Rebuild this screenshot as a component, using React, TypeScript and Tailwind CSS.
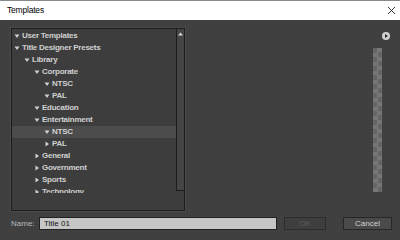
import React from 'react';

type Row = { label: string; level: number; open: boolean; selected?: boolean };

const rows: Row[] = [
  { label: 'User Templates', level: 0, open: true },
  { label: 'Title Designer Presets', level: 0, open: true },
  { label: 'Library', level: 1, open: true },
  { label: 'Corporate', level: 2, open: true },
  { label: 'NTSC', level: 3, open: true },
  { label: 'PAL', level: 3, open: true },
  { label: 'Education', level: 2, open: true },
  { label: 'Entertainment', level: 2, open: true },
  { label: 'NTSC', level: 3, open: true, selected: true },
  { label: 'PAL', level: 3, open: false },
  { label: 'General', level: 2, open: false },
  { label: 'Government', level: 2, open: false },
  { label: 'Sports', level: 2, open: false },
  { label: 'Technology', level: 2, open: false },
];

const Arrow: React.FC<{ open: boolean }> = ({ open }) => (
  <svg width="6" height="6" viewBox="0 0 6 6" className="shrink-0">
    {open ? <polygon points="0.5,1.5 5.5,1.5 3,5" fill="#cfcfcf" /> : <polygon points="1.5,0.5 5,3 1.5,5.5" fill="#cfcfcf" />}
  </svg>
);

export default function App() {
  const font = { fontFamily: '"Liberation Sans", Arial, sans-serif' };
  return (
    <div className="w-[400px] h-[240px] bg-[#404040] flex flex-col overflow-hidden" style={font}>
      {/* title bar */}
      <div className="h-[20px] bg-white border-t border-[#8a8a8a] flex items-center justify-between pl-[7px] pr-[4px]">
        <span className="text-[8.5px] text-black tracking-[-0.2px]">Templates</span>
        <svg width="9" height="9" viewBox="0 0 9 9">
          <path d="M1 1 L8 8 M8 1 L1 8" stroke="#222" strokeWidth="0.9" />
        </svg>
      </div>

      <div className="flex-1 flex flex-col">
        <div className="flex">
          {/* tree panel */}
          <div className="ml-[11px] mt-[8px] w-[174px] h-[183px] border border-[#1c1c1c] bg-[#3d3d3d] flex shadow-[0_0_0_1px_#4a4a4a]">
            <div className="flex-1 h-[164px] overflow-hidden pt-[1px]">
              {rows.map((r, i) => (
                <div
                  key={i}
                  className={`h-[12px] flex items-center gap-[2px] text-[8px] font-bold text-[#d0d0d0] tracking-[-0.25px] ${r.selected ? 'bg-[#4c4c4c]' : ''}`}
                  style={{ paddingLeft: 2 + r.level * 10 }}
                >
                  <Arrow open={r.open} />
                  <span className="leading-none">{r.label}</span>
                </div>
              ))}
            </div>
            <div className="w-[8px] h-[162px] bg-[#454545] border-l border-b border-[#1c1c1c] flex flex-col items-center">
              <svg width="7" height="6" viewBox="0 0 7 6" className="mt-[2px]">
                <polygon points="1,4.5 6,4.5 3.5,1.5" fill="#d8d8d8" />
              </svg>
            </div>
          </div>

          <div className="flex-1" />

          {/* right column */}
          <div className="flex flex-col items-end pr-[10px] mt-[12px]">
            <svg width="8" height="8" viewBox="0 0 8 8">
              <circle cx="4" cy="4" r="4" fill="#cfcfcf" />
              <polygon points="3,2 6,4 3,6" fill="#2a2a2a" />
            </svg>
            <div className="mt-[8px] mr-[8px] w-[9px] h-[144px] bg-[repeating-conic-gradient(#767676_0%_25%,#666666_0%_50%)] bg-[length:9px_9px]" />
          </div>
        </div>

        {/* bottom row */}
        <div className="flex items-center mt-[6px] h-[13px]">
          <span className="ml-[11px] w-[28px] text-[8px] text-[#b8b8b8]">Name:</span>
          <div className="w-[238px] h-[13px] bg-[#c6c6c6] border border-[#222] flex items-center pl-[4px] text-[8px] text-[#111]">
            Title 01
          </div>
          <div className="ml-[7px] w-[42px] h-[13px] border border-[#2c2c2c] bg-[#3e3e3e] flex items-center justify-center text-[8px] text-[#5c5c5c]">
            OK
          </div>
          <div className="ml-[17px] w-[49px] h-[13px] border border-[#262626] bg-[#4a4a4a] flex items-center justify-center text-[8px] text-[#d0d0d0]">
            Cancel
          </div>
        </div>
      </div>
    </div>
  );
}
